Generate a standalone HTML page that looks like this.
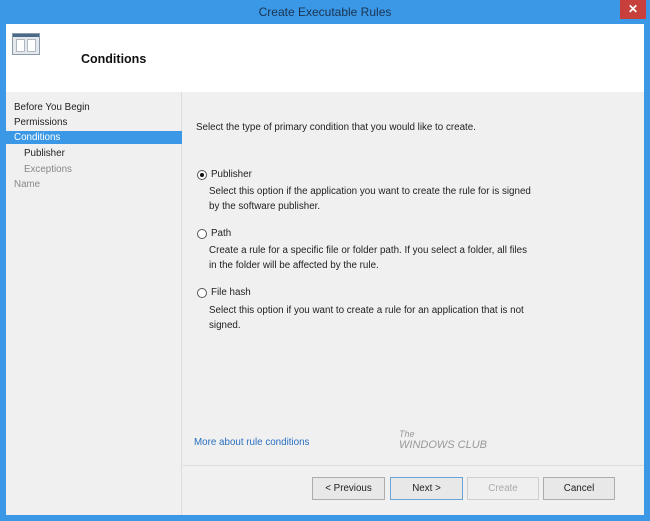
<!DOCTYPE html>
<html><head><style>
*{margin:0;padding:0;box-sizing:border-box}
body{width:650px;height:521px;background:#3b98e6;font-family:"Liberation Sans",sans-serif;font-size:9.8px;color:#222;position:relative;overflow:hidden}
.abs{position:absolute}
.title{left:0;top:0;width:650px;height:24px;text-align:center;line-height:24px;font-size:12px;color:#1a3350}
.close{left:620px;top:0;width:26px;height:19px;background:#c7403c;color:#fff;text-align:center;line-height:18px;font-size:12px;font-weight:bold}
.win{left:6px;top:24px;width:638px;height:491px;background:#f0f0f0}
.hdr{left:0;top:0;width:638px;height:68px;background:#fff}
.left{left:0;top:68px;width:176px;height:423px;background:#f0f0f0;border-right:1px solid #dcdcdc}
.item{position:absolute;left:8px;font-size:9.8px}
.btn{position:absolute;top:453px;height:23px;background:#e8e8e8;border:1px solid #acacac;text-align:center;line-height:21px;font-size:9.8px}
p{position:absolute;line-height:15px}
.radio{position:absolute;width:10px;height:10px;border:1px solid #555;border-radius:50%;background:#fff}
</style></head><body>
<div class="abs title">Create Executable Rules</div>
<div class="abs close">✕</div>
<div class="abs win">
 <div class="abs hdr">
  <div class="abs" style="left:6px;top:9px;width:28px;height:22px;border:1px solid #8a9aa8;background:#e4e8ec">
   <div class="abs" style="left:0;top:0;width:26px;height:3px;background:#4a6a8a"></div>
   <div class="abs" style="left:3px;top:5px;width:9px;height:13px;background:#fff;border:1px solid #b0b8c0"></div>
   <div class="abs" style="left:14px;top:5px;width:9px;height:13px;background:#fff;border:1px solid #b0b8c0"></div>
  </div>
  <div class="abs" style="left:75px;top:28px;font-size:12.5px;font-weight:bold;color:#111">Conditions</div>
 </div>
 <div class="abs left">
  <div class="item" style="top:10px">Before You Begin</div>
  <div class="item" style="top:25px">Permissions</div>
  <div class="abs" style="left:0;top:39px;width:176px;height:13px;background:#3b98e6"></div>
  <div class="item" style="top:40px;color:#fff">Conditions</div>
  <div class="item" style="top:56px;left:18px">Publisher</div>
  <div class="item" style="top:72px;left:18px;color:#888">Exceptions</div>
  <div class="item" style="top:87px;color:#888">Name</div>
 </div>
 <p style="left:190px;top:96px">Select the type of primary condition that you would like to create.</p>
 <div class="radio" style="left:191px;top:146px"><div class="abs" style="left:2px;top:2px;width:4px;height:4px;border-radius:50%;background:#111"></div></div>
 <p style="left:205px;top:143px">Publisher</p>
 <p style="left:203px;top:160px">Select this option if the application you want to create the rule for is signed<br>by the software publisher.</p>
 <div class="radio" style="left:191px;top:205px"></div>
 <p style="left:205px;top:202px">Path</p>
 <p style="left:203px;top:219px">Create a rule for a specific file or folder path. If you select a folder, all files<br>in the folder will be affected by the rule.</p>
 <div class="radio" style="left:191px;top:264px"></div>
 <p style="left:205px;top:261px">File hash</p>
 <p style="left:203px;top:279px">Select this option if you want to create a rule for an application that is not<br>signed.</p>
 <p style="left:188px;top:411px;color:#2a6fc0">More about rule conditions</p>
 <div class="abs" style="left:393px;top:405px;color:#999;font-style:italic;font-size:9px;line-height:11px">The<br><span style="font-size:11px">WINDOWS CLUB</span></div>
 <div class="abs" style="left:177px;top:441px;width:461px;height:1px;background:#dcdcdc"></div>
 <div class="btn" style="left:306px;width:73px">&lt; Previous</div>
 <div class="btn" style="left:384px;width:73px;border-color:#6aa3d8">Next &gt;</div>
 <div class="btn" style="left:461px;width:72px;color:#aaa;border-color:#cfcfcf;background:#efefef">Create</div>
 <div class="btn" style="left:537px;width:72px">Cancel</div>
</div>
</body></html>
